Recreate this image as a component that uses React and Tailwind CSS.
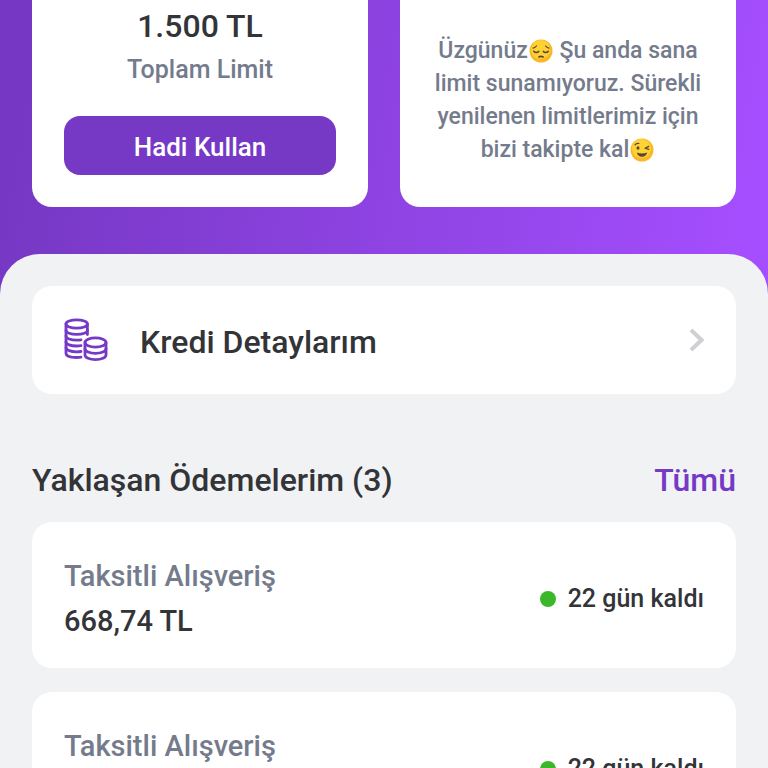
import React from "react";

const payments = [
  { id: 1, title: "Taksitli Alışveriş", amount: "668,74 TL", due: "22 gün kaldı" },
  { id: 2, title: "Taksitli Alışveriş", amount: "668,74 TL", due: "22 gün kaldı" },
];

const SadFace = () => (
  <svg viewBox="0 0 24 24" className="mx-px inline-block size-6 align-[-5px]" role="img" aria-label="üzgün">
    <circle cx="12" cy="12" r="11.5" fill="#f9b825" />
    <circle cx="11.5" cy="10.5" r="9.5" fill="#fdd233" />
    <g fill="none" stroke="#5d4037" strokeWidth="1.2" strokeLinecap="round">
      <path d="M4 9.200c1.500-.3 2.600-1 3.400-2.200M20 9.200c-1.500-.3-2.600-1-3.400-2.200" />
      <path d="M4.800 12.200c1.200 1.600 3.600 1.700 4.900.2M14.300 12.400c1.300 1.500 3.700 1.400 4.900-.2" strokeWidth="1.500" />
      <path d="M9.800 18c1.400-.8 3-.8 4.400 0" strokeWidth="1.500" />
    </g>
  </svg>
);

const WinkFace = () => (
  <svg viewBox="0 0 24 24" className="mx-px inline-block size-6 align-[-5px]" role="img" aria-label="göz kırpan">
    <circle cx="12" cy="12" r="11.5" fill="#f9b825" />
    <circle cx="11.5" cy="10.5" r="9.5" fill="#fdd233" />
    <ellipse cx="8" cy="10" rx="1.5" ry="1.700" fill="#5d4037" />
    <g fill="none" stroke="#5d4037" strokeWidth="1.2" strokeLinecap="round" strokeLinejoin="round">
      <path d="M5 6.800c1-1.300 2.400-1.700 3.900-1.300" />
      <path d="M18.800 8.400l-3.800 1.800 3.800 1.200" />
    </g>
    <path d="M6.800 14.600c3.200 1.300 7.200 1.300 10.400 0-.5 2.700-2.400 4.200-5.200 4.200s-4.700-1.500-5.200-4.200z" fill="#5d4037" />
  </svg>
);

const CoinsIcon = () => (
  <svg
    viewBox="0 0 44 44"
    className="size-11 shrink-0"
    fill="none"
    stroke="#7639c6"
    strokeWidth="2.8"
    strokeLinecap="round"
    aria-hidden="true"
  >
    <ellipse cx="12.700" cy="6" rx="10.700" ry="4.200" />
    <path d="M2 6v29.500c0 2.600 4.700 4 10.700 4 1.500 0 2.900-.1 4.300-.3" />
    <path d="M23.400 6v10.500" />
    <path d="M2 12.200c0 2.500 4.700 4.200 10.700 4.200s10.700-1.700 10.700-4.200" />
    <path d="M2 18c0 2.500 4.700 4.200 10.700 4.200 1.500 0 2.900-.1 4.300-.3" />
    <path d="M2 23.800c0 2.500 4.700 4.200 10.700 4.200 1.500 0 2.900-.1 4.300-.3" />
    <path d="M2 29.600c0 2.500 4.700 4.200 10.700 4.200 1.500 0 2.900-.1 4.300-.3" />
    <ellipse cx="31.500" cy="24.500" rx="10.500" ry="4.600" />
    <path d="M21 24.500v12.500c0 2.600 4.700 4.600 10.500 4.600S42 39.600 42 37V24.500" />
    <path d="M21 30.700c0 2.600 4.700 4.600 10.500 4.600S42 33.300 42 30.700" />
  </svg>
);

const PaymentCard = ({ title, amount, due }) => (
  <li className="flex items-center justify-between rounded-[20px] bg-white px-8 pt-8 pb-6">
    <div>
      <p className="text-[29px] leading-[45px] font-medium text-[#747b8c]">{title}</p>
      <p className="text-[29px] leading-[45px] font-medium text-[#333438]">{amount}</p>
    </div>
    <div className="flex items-center gap-3">
      <span className="size-4 rounded-full bg-[#3cb72c]" />
      <span className="text-[25px] font-medium text-[#333438]">{due}</span>
    </div>
  </li>
);

const App = () => {
  return (
    <div
      lang="tr"
      className="flex h-screen flex-col overflow-hidden bg-[linear-gradient(100deg,#7638c4_4%,#a54eff_88%)] font-['Roboto','Noto_Sans',sans-serif]"
    >
      <section className="grid shrink-0 grid-cols-2 gap-8 px-8 pb-[47px]">
        <div className="flex flex-col rounded-b-[20px] bg-white px-8 pb-8 text-center">
          <p className="pt-1 text-[32px] leading-[44px] font-medium text-[#333438]">1.500 TL</p>
          <p className="text-[25px] leading-[44px] font-medium text-[#747b8c]">Toplam Limit</p>
          <button
            type="button"
            className="mt-6 h-[59px] w-full rounded-[16px] bg-[#7639c6] pt-1 text-[26px] font-medium text-white"
          >
            Hadi Kullan
          </button>
        </div>
        <div className="rounded-b-[20px] bg-white pt-[34px] text-center">
          <p className="text-[23px] leading-[33px] font-medium text-[#747b8c]">
            Üzgünüz
            <SadFace /> Şu anda sana
            <br />
            limit sunamıyoruz. Sürekli
            <br />
            yenilenen limitlerimiz için
            <br />
            bizi takipte kal
            <WinkFace />
          </p>
        </div>
      </section>

      <main className="grow rounded-t-[40px] bg-[#f1f2f4] px-8 pt-8">
        <button type="button" className="flex h-[108px] w-full items-center rounded-[20px] bg-white px-8 text-left">
          <CoinsIcon />
          <span className="grow pt-1 pl-8 text-[32px] font-medium text-[#333438]">Kredi Detaylarım</span>
          <svg viewBox="0 0 16 24" className="h-6 w-4" fill="none" stroke="#cfd0d4" strokeWidth="4" aria-hidden="true">
            <path d="M3 2l10.500 10L3 22" />
          </svg>
        </button>

        <div className="flex items-center justify-between pt-16 pb-5 text-[32px] leading-[44px] font-medium">
          <h2 className="text-[#333438]">Yaklaşan Ödemelerim (3)</h2>
          <a href="#tumu" className="text-[#7639c6]">
            Tümü
          </a>
        </div>

        <ul className="space-y-6">
          {payments.map((payment) => (
            <PaymentCard key={payment.id} {...payment} />
          ))}
        </ul>
      </main>
    </div>
  );
};

export default App;
